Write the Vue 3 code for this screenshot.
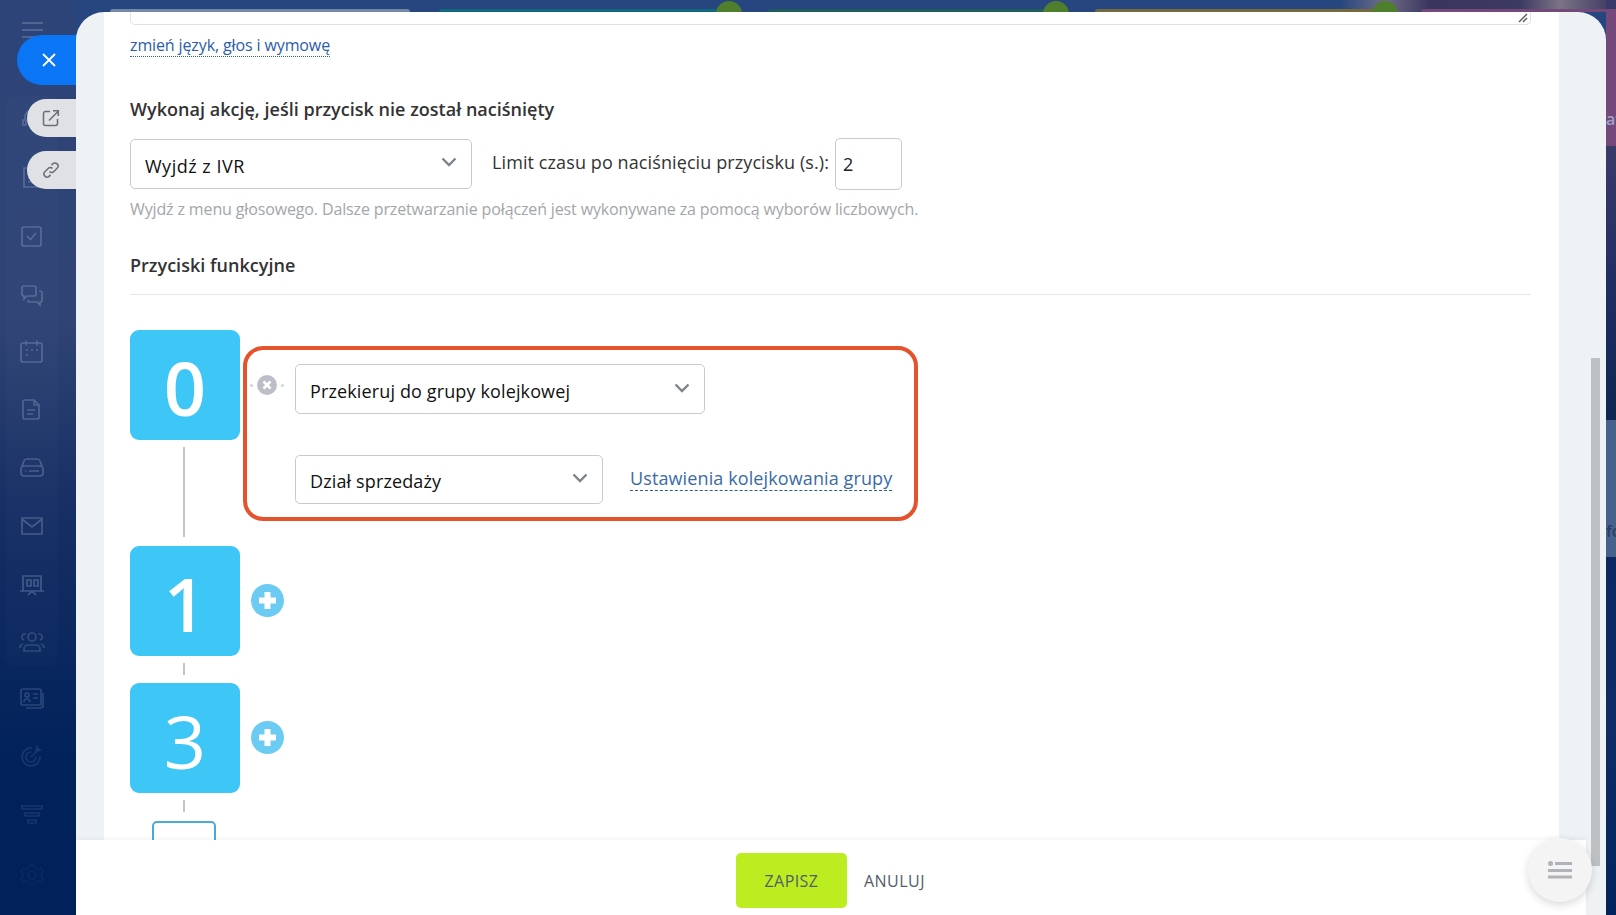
<script setup>
const navIcons = [
  { y: 'i1', d: 'M6 14v-3a7 7 0 0 1 14 0v3M4 14h3v5H4zM19 14h3v5h-3zM21 19c0 2-3 3-6 3' },
  { y: 'i2', d: 'M5 3h15v19H5zM9 9h7M9 13h7M9 17h4' },
  { y: 'i3', d: 'M5 3h15a2 2 0 0 1 2 2v15a2 2 0 0 1-2 2H5a2 2 0 0 1-2-2V5a2 2 0 0 1 2-2zM8 12l3.5 3.5L17 9' },
  { y: 'i4', d: 'M3 5a2 2 0 0 1 2-2h10a2 2 0 0 1 2 2v6a2 2 0 0 1-2 2H8l-3 3v-3a2 2 0 0 1-2-2zM20 8h1a2 2 0 0 1 2 2v7a2 2 0 0 1-2 2v3l-3-3h-7a2 2 0 0 1-2-2' },
  { y: 'i5', d: 'M4 4h17a2 2 0 0 1 2 2v15a2 2 0 0 1-2 2H4a2 2 0 0 1-2-2V6a2 2 0 0 1 2-2zM7 1.5v5M18 1.5v5M7 11h2M12 11h2M17 11h2M7 16h2' },
  { y: 'i6', d: 'M6 3h9l5 5v12a2 2 0 0 1-2 2H6a2 2 0 0 1-2-2V5a2 2 0 0 1 2-2zM15 3v5h5M8 13h8M8 17h6' },
  { y: 'i7', d: 'M2 14a3 3 0 0 1 3-3h16a3 3 0 0 1 3 3v4a3 3 0 0 1-3 3H5a3 3 0 0 1-3-3zM3 11l2-5a3 3 0 0 1 3-2h10a3 3 0 0 1 3 2l2 5M6 16h1M10 16h10' },
  { y: 'i8', d: 'M3 5h20v16H3zM3 6l10 8 10-8' },
  { y: 'i9', d: 'M4 3h18v15H4zM1 18h24M13 18l-4 4M13 18l4 4M8 7h4v6H8zM15 7h4v6h-4z' },
  { y: 'i10', d: 'M13 3a4 4 0 1 1 0 8 4 4 0 0 1 0-8zM5 21v-2a4 4 0 0 1 4-4h8a4 4 0 0 1 4 4v2zM7 4a3 3 0 0 0-2 6M19 4a3 3 0 0 1 2 6M1 18a4 4 0 0 1 3-4M25 18a4 4 0 0 0-3-4' },
  { y: 'i11', d: 'M2 5a2 2 0 0 1 2-2h16a2 2 0 0 1 2 2v12a2 2 0 0 1-2 2H4a2 2 0 0 1-2-2zM8 7a2 2 0 1 1 0 4 2 2 0 0 1 0-4zM5 16a3 3 0 0 1 6 0M14 8h5M14 12h5M24 7v12a3 3 0 0 1-3 3H7' },
  { y: 'i12', d: 'M21 11a9 9 0 1 1-8-8M17 12a5 5 0 1 1-5-5M12 12l7-7M17 5l1-3 1 2 2 1-3 1z' },
  { y: 'i13', d: 'M3 4h20v3H3zM6 11h14v3H6zM9 18h8v3H9z' },
  { y: 'i14', d: 'M13 8a4 4 0 1 1 0 8 4 4 0 0 1 0-8zM11 2h4l1 3 3 1 3-1 2 3-2 3v2l2 3-2 3-3-1-3 1-1 3h-4l-1-3-3-1-3 1-2-3 2-3v-2L2 8l2-3 3 1 3-1z' }
]
const keys = [
  { n: '0', cls: 'bold' },
  { n: '1', cls: 'bold' },
  { n: '3', cls: 'thin' }
]
</script>

<template>
  <div class="desk">
    <div class="top-bits">
      <span class="photo"></span>
      <span class="bit b-gray"></span>
      <span class="bit b-teal"></span>
      <span class="pin p1"></span>
      <span class="bit b-green"></span>
      <span class="pin p2"></span>
      <span class="bit b-olive"></span>
      <span class="pin p3"></span>
      <span class="bit b-purple"></span>
    </div>

    <aside class="rail">
      <div class="rail-glow"></div>
      <div class="burger"><i></i><i></i><i></i></div>
      <svg v-for="ic in navIcons" :key="ic.y" :class="['nav', ic.y]" viewBox="0 0 26 26" width="26" height="26" fill="none">
        <path :d="ic.d" />
      </svg>
    </aside>

    <button class="tab close" aria-label="close">
      <svg viewBox="0 0 16 16" width="16" height="16"><path d="M2 2l12 12M14 2L2 14" stroke="#fff" stroke-width="1.8" fill="none"/></svg>
    </button>
    <button class="tab ext t1" aria-label="open">
      <svg viewBox="0 0 18 18" width="18" height="18" fill="none" stroke="#6a6e75" stroke-width="1.5"><path d="M8 2.5H3.5a2 2 0 0 0-2 2v10a2 2 0 0 0 2 2h10a2 2 0 0 0 2-2V10M7 11.5l9-9M11 1.7h5.3V7"/></svg>
    </button>
    <button class="tab ext t2" aria-label="link">
      <svg viewBox="0 0 18 18" width="18" height="18" fill="none" stroke="#6a6e75" stroke-width="1.5"><path d="M7.5 10.5a3 3 0 0 0 4.4 0l3.2-3.2a3.1 3.1 0 0 0-4.4-4.4L9.5 4.1M10.5 7.5a3 3 0 0 0-4.4 0l-3.2 3.2a3.1 3.1 0 0 0 4.4 4.4l1.2-1.2"/></svg>
    </button>

    <main class="panel">
      <div class="sheet">
        <div class="textarea-end">
          <svg class="grip" viewBox="0 0 10 10" width="10" height="10"><path d="M1 9l8-8M5 9l4-4" stroke="#555" stroke-width="1.4" fill="none"/></svg>
        </div>
        <div class="link-line"><a class="voice">zmień język, głos i wymowę</a></div>

        <h3 class="title first">Wykonaj akcję, jeśli przycisk nie został naciśnięty</h3>
        <div class="action-row">
          <div class="select action"><span>Wyjdź z IVR</span><svg class="chev" viewBox="0 0 16 10" width="16" height="10"><path d="M1.5 1.5L8 8l6.5-6.5" /></svg></div>
          <label class="limit">Limit czasu po naciśnięciu przycisku (s.):</label>
          <div class="num">2</div>
        </div>
        <p class="hint">Wyjdź z menu głosowego. Dalsze przetwarzanie połączeń jest wykonywane za pomocą wyborów liczbowych.</p>

        <h3 class="title second">Przyciski funkcyjne</h3>
        <div class="rule"></div>

        <div class="keys">
          <div class="key-row">
            <div :class="['key', keys[0].cls]">{{ keys[0].n }}</div>
            <div class="marked">
              <div class="remove">
                <span class="dot"></span>
                <svg viewBox="0 0 20 20" width="20" height="20"><circle cx="10" cy="10" r="10" fill="#bcbfc7"/><path d="M6.5 6.5l7 7M13.5 6.5l-7 7" stroke="#fff" stroke-width="2.6"/></svg>
                <span class="dot"></span>
              </div>
              <div class="marked-fields">
                <div class="select queue"><span>Przekieruj do grupy kolejkowej</span><svg class="chev" viewBox="0 0 16 10" width="16" height="10"><path d="M1.5 1.5L8 8l6.5-6.5" /></svg></div>
                <div class="group-row">
                  <div class="select dept"><span>Dział sprzedaży</span><svg class="chev" viewBox="0 0 16 10" width="16" height="10"><path d="M1.5 1.5L8 8l6.5-6.5" /></svg></div>
                  <a class="queue-link">Ustawienia kolejkowania grupy</a>
                </div>
              </div>
            </div>
          </div>
          <div class="conn long"></div>
          <template v-for="k in keys.slice(1)" :key="k.n">
            <div class="key-row center">
              <div :class="['key', k.cls]">{{ k.n }}</div>
              <svg class="plus" viewBox="0 0 33 33" width="33" height="33"><circle cx="16.5" cy="16.5" r="16.5" fill="#6ccbf3"/><path d="M16.5 8v17M8 16.5h17" stroke="#fff" stroke-width="6"/></svg>
            </div>
            <div class="conn short"></div>
          </template>
          <div class="next-key"></div>
        </div>
      </div>

      <div class="scrollbar"></div>
      <footer class="foot">
        <button class="save">ZAPISZ</button>
        <button class="cancel">ANULUJ</button>
      </footer>
      <button class="fab" aria-label="menu">
        <svg viewBox="0 0 24 18" width="24" height="18"><circle cx="2.5" cy="2.5" r="2.5" fill="#b0b3ba"/><path d="M7 2.5h17M0 9.5h24M0 16h24" stroke="#b0b3ba" stroke-width="3"/></svg>
      </button>
    </main>

    <div class="edge">
      <span class="edge-a">af</span>
      <span class="edge-f">fo</span>
    </div>
  </div>
</template>

<style>
html, body { margin: 0; padding: 0; overflow: hidden; }
</style>

<style scoped>
* { box-sizing: border-box; }
.desk {
  position: relative;
  width: 1616px;
  height: 915px;
  overflow: hidden;
  display: flex;
  background: #27467f;
  font-family: "Open Sans", "Noto Sans", sans-serif;
  color: #333;
}
.top-bits { position: absolute; left: 0; top: 0; width: 100%; height: 12px; }
.photo { position: absolute; left: 1340px; right: 0; top: 0; height: 12px; background: linear-gradient(90deg, #27467f 0, #6e6c84 45px, #39355f 90px, #3b3a62 180px, #7c7484 220px, #3a3560 100%); }
.bit { position: absolute; top: 9px; height: 3px; border-radius: 6px 6px 0 0; }
.b-gray { left: 110px; width: 300px; background: #7488a8; }
.b-teal { left: 439px; width: 285px; background: #0f6a80; }
.b-green { left: 768px; width: 285px; background: #1d5e5c; }
.b-olive { left: 1095px; width: 285px; background: #746a3c; }
.b-purple { left: 1421px; width: 195px; background: #74497a; }
.pin { position: absolute; top: 1px; width: 26px; height: 26px; border-radius: 50%; background: #4f7f2c; }
.p1 { left: 716px; }
.p2 { left: 1043px; }
.p3 { left: 1372px; }
.rail {
  position: relative;
  flex: 0 0 76px;
  height: 100%;
  background: linear-gradient(180deg, #2d4479 0%, #2f4474 35%, #172f65 55%, #00215a 85%);
}
.rail-glow { position: absolute; left: 6px; top: 96px; width: 52px; height: 570px; border-radius: 10px; background: rgba(255,255,255,.015); }
.burger { position: absolute; left: 22px; top: 22px; width: 21px; display: flex; flex-direction: column; gap: 5px; }
.burger i { display: block; height: 2px; background: rgba(255,255,255,.18); }
.nav { position: absolute; left: 19px; stroke: rgba(190,205,230,.28); stroke-width: 1.7; }
.i1 { top: 106px; } .i2 { top: 165px; } .i3 { top: 224px; } .i4 { top: 283px; }
.i5 { top: 339px; } .i6 { top: 397px; } .i7 { top: 455px; } .i8 { top: 513px; }
.i9 { top: 573px; } .i10 { top: 630px; } .i11 { top: 686px; } .i12 { top: 745px; }
.i13 { top: 802px; } .i14 { top: 863px; stroke: rgba(190,205,230,.05); }
.i10, .i11 { stroke: rgba(190,205,230,.2); }
.i12, .i13 { stroke: rgba(190,205,230,.12); }
.tab { position: absolute; border: 0; padding: 0; display: flex; align-items: center; }
.close { left: 17px; top: 35px; width: 70px; height: 50px; border-radius: 25px 0 0 25px; background: #0a75f5; padding-left: 24px; }
.ext { left: 27px; width: 60px; height: 38px; border-radius: 19px 0 0 19px; background: #dfe1e5; padding-left: 15px; }
.t1 { top: 99px; }
.t2 { top: 151px; }
.panel {
  position: relative;
  z-index: 1;
  flex: 0 0 1530px;
  margin-top: 12px;
  height: 903px;
  background: #eef2f5;
  border-radius: 28px 28px 0 0;
  display: flex;
  flex-direction: column;
  overflow: hidden;
}
.sheet {
  flex: 1;
  min-height: 0;
  margin: 0 47px 0 28px;
  background: #fff;
  padding: 0 28px 0 26px;
  overflow: hidden;
}
.textarea-end {
  position: relative;
  height: 13px;
  border: 1px solid #dde2e5;
  border-top: 0;
  border-radius: 0 0 5px 5px;
}
.grip { position: absolute; right: 2px; bottom: 1px; }
.link-line { margin-top: 9px; height: 24px; }
.voice {
  display: inline-block;
  font-size: 16px;
  line-height: 21px;
  color: #2b5cab;
  border-bottom: 1px dotted #2b5cab;
  letter-spacing: -0.12px;
}
.title { margin: 0; font-size: 18px; line-height: 24px; font-weight: 600; color: #333; letter-spacing: 0.02px; }
.first { margin-top: 39px; }
.action-row { display: flex; align-items: flex-start; margin-top: 17px; }
.select {
  position: relative;
  display: flex;
  align-items: center;
  justify-content: space-between;
  height: 50px;
  padding: 3px 14px 0 14px;
  border: 1px solid #c6cbd0;
  border-radius: 5px;
  background: #fff;
  font-size: 18px;
  color: #111;
  letter-spacing: 0.13px;
}
.chev { fill: none; stroke: #7d838c; stroke-width: 2.4; margin-top: -5px; }
.action { width: 342px; margin-top: 1px; letter-spacing: 0.5px; }
.action .chev { margin-top: -8px; }
.limit { margin-left: 20px; margin-top: 12px; font-size: 18px; line-height: 24px; color: #333; letter-spacing: 0.1px; }
.num {
  width: 67px;
  height: 52px;
  margin-left: 6px;
  padding: 13px 7px 0;
  border: 1px solid #c6cbd0;
  border-radius: 5px;
  font-size: 18px;
  color: #222;
}
.hint { margin: 8px 0 0; font-size: 16px; line-height: 22px; color: #a3a6aa; letter-spacing: -0.135px; }
.second { margin-top: 33px; }
.rule { margin-top: 17px; height: 1px; background: #e4e8ea; }
.keys { margin-top: 35px; display: flex; flex-direction: column; }
.key-row { display: flex; align-items: flex-start; height: 110px; }
.key-row.center { align-items: center; }
.key {
  flex: 0 0 110px;
  height: 110px;
  border-radius: 9px;
  background: #3dc6f6;
  color: #fff;
  display: flex;
  align-items: center;
  justify-content: center;
  padding-top: 6px;
  font-size: 74px;
  line-height: 1;
}
.key.bold { font-weight: 600; }
.key.thin { font-weight: 400; }
.plus { margin-left: 11px; margin-top: -2px; }
.marked {
  position: relative;
  width: 675px;
  height: 175px;
  margin: 16px 0 0 3px;
  border: 4px solid #e5532d;
  border-radius: 20px;
  flex: none;
  padding: 14px 0 0 48px;
}
.remove { position: absolute; left: 3px; top: 25px; display: flex; align-items: center; gap: 4px; }
.dot { width: 3px; height: 3px; border-radius: 50%; background: #cfd2d6; }
.queue { width: 410px; }
.group-row { display: flex; align-items: center; margin-top: 41px; }
.dept { width: 308px; height: 49px; padding-top: 2px; }
.queue-link {
  margin-left: 27px;
  margin-top: -2px;
  font-size: 18px;
  line-height: 24px;
  color: #3a6ba8;
  border-bottom: 1px dashed #2b5c9a;
  letter-spacing: 0.11px;
}
.conn { width: 2px; background: #c2c4c6; margin-left: 53px; }
.long { height: 90px; margin-top: 7px; margin-bottom: 9px; }
.short { height: 12px; margin-top: 7px; margin-bottom: 8px; }
.next-key { flex: none; width: 64px; height: 40px; margin: 1px 0 0 22px; border: 2px solid #4aa9d9; border-radius: 5px 5px 0 0; }
.scrollbar { position: absolute; left: 1515px; top: 346px; width: 9px; height: 508px; background: #bdc1c3; }
.foot {
  position: absolute;
  left: 0;
  bottom: 0;
  width: 1510px;
  height: 75px;
  background: #fff;
  box-shadow: 0 -2px 5px rgba(0,0,0,.04);
  display: flex;
  align-items: flex-start;
  justify-content: center;
  padding: 13px 1px 0 0;
  gap: 17px;
}
.foot button { border: 0; font-family: inherit; font-size: 16px; color: #535c69; font-weight: 500; letter-spacing: 0.5px; }
.foot .save { width: 111px; height: 55px; background: #bbed21; border-radius: 5px; letter-spacing: 0.4px; }
.cancel { background: transparent; height: 55px; padding: 0; }
.fab {
  position: absolute;
  left: 1452px;
  top: 826px;
  width: 64px;
  height: 64px;
  border: 0;
  border-radius: 50%;
  background: #f4f4f5;
  box-shadow: 0 3px 8px rgba(0,0,0,.15);
  display: flex;
  align-items: center;
  justify-content: center;
  padding: 0;
}
.edge { position: relative; flex: 1; overflow: hidden; background: linear-gradient(180deg, #3a3a6a 146px, #1e2c60 300px, #0f2750 420px, #0c2862 560px, #0f2c66 720px, #02245c 100%); }
.edge::before { content: ""; position: absolute; inset: 9px 0 auto 0; height: 137px; background: #74497a; }
.edge::after { content: ""; position: absolute; left: 0; right: 0; top: 420px; height: 137px; background: #47628a; }
.edge-a, .edge-f { position: absolute; z-index: 1; left: 0; font-size: 16px; font-weight: 600; white-space: nowrap; }
.edge-a { top: 108px; color: #9aa3c8; }
.edge-f { top: 520px; color: #2a3f6a; }
</style>
